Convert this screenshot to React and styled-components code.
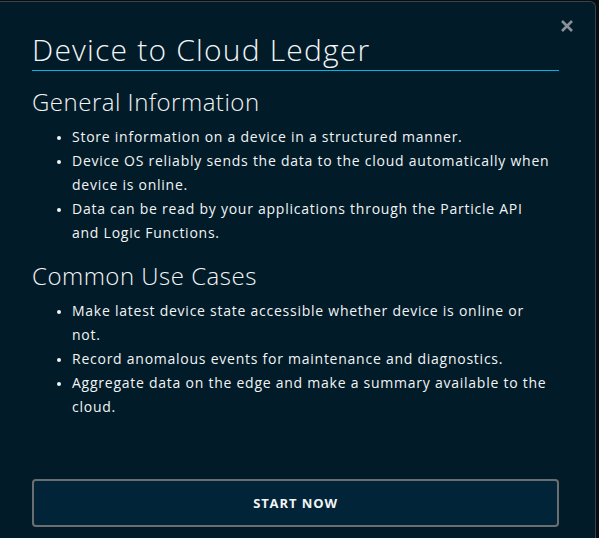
import React from "react";
import styled, { createGlobalStyle } from "styled-components";

const Global = createGlobalStyle`
  html, body { margin: 0; padding: 0; background: #060c10; }
  body { font-family: "Open Sans", "Liberation Sans", sans-serif; }
  * { box-sizing: border-box; }
`;

const Backdrop = styled.div`
  width: 599px;
  height: 538px;
  overflow: hidden;
  background: #060c10;
  padding-top: 1px;
`;

const Modal = styled.div`
  position: relative;
  width: 596px;
  height: 560px;
  background: #011b28;
  border-right: 1px solid #3a4349;
  border-top: 1px solid #3a4349;
  border-top-right-radius: 6px;
  padding: 30px 36px 0 32px;
  display: flex;
  flex-direction: column;
  color: #f2f4f5;
`;

const Close = styled.button`
  position: absolute;
  top: 16px;
  right: 20px;
  background: none;
  border: none;
  padding: 0;
  width: 16px;
  height: 16px;
  cursor: pointer;
`;

const Title = styled.h1`
  margin: 0;
  font-weight: 300;
  font-size: 30px;
  line-height: 36px;
  padding-bottom: 2px;
  border-bottom: 1px solid #00b4e6;
  letter-spacing: 1.2px;
`;

const Heading = styled.h2`
  margin: ${(p) => p.$top}px 0 0;
  font-weight: 300;
  font-size: 24px;
  line-height: 30px;
  letter-spacing: 0.5px;
`;

const List = styled.ul`
  margin: 8px 0 0;
  padding: 0 8px 0 40px;
  list-style: disc;
  font-size: 14px;
  line-height: 24px;
  letter-spacing: 0.75px;
  & li::marker { font-size: 11px; }
`;

const Button = styled.button`
  margin-top: auto;
  margin-bottom: 34px;
  height: 48px;
  width: 100%;
  background: #022438;
  border: 2px solid #6b6e70;
  border-radius: 4px;
  color: #f2f4f5;
  font-family: "Open Sans", "Liberation Sans", sans-serif;
  font-weight: 700;
  font-size: 13px;
  letter-spacing: 0.9px;
`;

const Content = styled.div`
  display: flex;
  flex-direction: column;
  height: 100%;
`;

export default function App() {
  return (
    <Backdrop>
      <Global />
      <Modal>
        <Close aria-label="Close">
          <svg width="16" height="16" viewBox="0 0 16 16">
            <path d="M3 3 L13 13 M13 3 L3 13" stroke="#8b9196" strokeWidth="2.6" strokeLinecap="butt" />
          </svg>
        </Close>
        <Content>
          <Title>Device to Cloud Ledger</Title>
          <Heading $top={16}>General Information</Heading>
          <List>
            <li>Store information on a device in a structured manner.</li>
            <li>Device OS reliably sends the data to the cloud automatically when device is online.</li>
            <li>Data can be read by your applications through the Particle API and Logic Functions.</li>
          </List>
          <Heading $top={16}>Common Use Cases</Heading>
          <List>
            <li>Make latest device state accessible whether device is online or not.</li>
            <li>Record anomalous events for maintenance and diagnostics.</li>
            <li>Aggregate data on the edge and make a summary available to the cloud.</li>
          </List>
          <Button>START NOW</Button>
        </Content>
      </Modal>
    </Backdrop>
  );
}
